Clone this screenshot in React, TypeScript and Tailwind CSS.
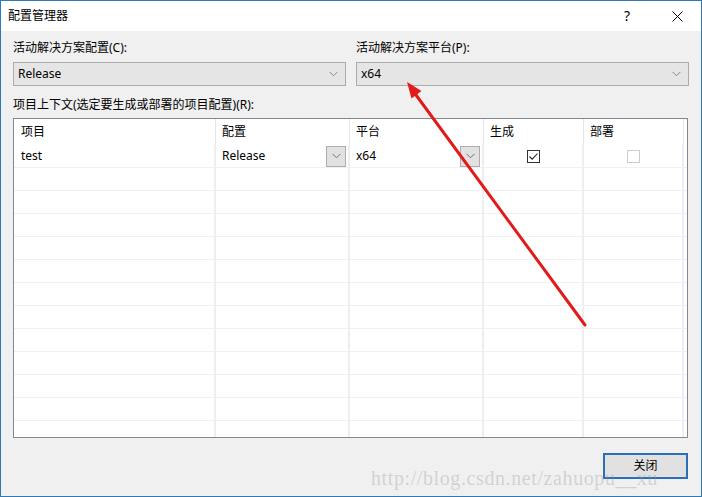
import React from "react";

const Chevron = ({ color = "#707070" }: { color?: string }) => (
  <svg width="9" height="6" viewBox="0 0 9 6">
    <path d="M0.5 0.8 L4.5 4.8 L8.5 0.8" fill="none" stroke={color} strokeWidth="1" />
  </svg>
);

const COLS = [202, 134, 134, 100, 100];

function Row({ first }: { first?: boolean }) {
  return (
    <div className="flex h-[23px] border-b border-[#f0f0f0] shrink-0">
      <div className="w-[202px] border-r-2 border-[#eceef2] flex items-center pl-[7px]">{first ? "test" : ""}</div>
      <div className="w-[134px] border-r-2 border-[#eceef2] flex items-center pl-[6px] pr-[2px]">
        {first && (
          <>
            <span className="flex-1">Release</span>
            <div className="w-[20px] h-[21px] bg-[#e1e1e1] border border-[#adadad] flex items-center justify-center">
              <Chevron />
            </div>
          </>
        )}
      </div>
      <div className="w-[134px] border-r-2 border-[#eceef2] flex items-center pl-[6px] pr-[2px]">
        {first && (
          <>
            <span className="flex-1">x64</span>
            <div className="w-[20px] h-[21px] bg-[#e1e1e1] border border-[#adadad] flex items-center justify-center">
              <Chevron />
            </div>
          </>
        )}
      </div>
      <div className="w-[100px] border-r-2 border-[#eceef2] flex items-center justify-center">
        {first && (
          <div className="w-[13px] h-[13px] border border-[#333333] bg-white flex items-center justify-center">
            <svg width="11" height="11" viewBox="0 0 11 11">
              <path d="M1.5 5.5 L4.2 8.2 L9.5 2.5" fill="none" stroke="#222" strokeWidth="1.1" />
            </svg>
          </div>
        )}
      </div>
      <div className="w-[100px] border-r-2 border-[#eceef2] flex items-center justify-center">
        {first && <div className="w-[13px] h-[13px] border border-[#cccccc] bg-white" />}
      </div>
      <div className="flex-1" />
    </div>
  );
}

export default function App() {
  const headers = ["项目", "配置", "平台", "生成", "部署"];
  return (
    <div className="relative w-[702px] h-[497px] border border-[#2e7ab8] bg-[#f0f0f0] flex flex-col text-[12px] leading-[16px] text-black font-['Noto_Sans','Noto_Sans_CJK_SC',sans-serif] overflow-hidden">
      {/* title bar */}
      <div className="h-[30px] bg-white flex items-center pl-[7px] shrink-0">
        <span className="text-[12px]">配置管理器</span>
        <span className="ml-auto w-[14px] text-center text-[14px] mr-[38px]">?</span>
        <svg width="11" height="11" viewBox="0 0 11 11" className="mr-[18px]">
          <path d="M0.5 0.5 L10.5 10.5 M10.5 0.5 L0.5 10.5" stroke="#000" strokeWidth="1" />
        </svg>
      </div>

      {/* body */}
      <div className="flex-1 flex flex-col pl-[12px] pr-[12px] pt-[9px]">
        <div className="grid grid-cols-2 gap-x-[10px]">
          <div className="flex flex-col">
            <span className="h-[16px]">活动解决方案配置(C):</span>
            <div className="mt-[6px] h-[24px] bg-[#e5e5e5] border border-[#acacac] flex items-center pl-[4px] pr-[7px]">
              <span className="flex-1">Release</span>
              <Chevron color="#8a8a8a" />
            </div>
          </div>
          <div className="flex flex-col">
            <span className="h-[16px]">活动解决方案平台(P):</span>
            <div className="mt-[6px] h-[24px] bg-[#e5e5e5] border border-[#acacac] flex items-center pl-[4px] pr-[7px]">
              <span className="flex-1">x64</span>
              <Chevron color="#8a8a8a" />
            </div>
          </div>
        </div>

        <span className="mt-[11px] h-[16px]">项目上下文(选定要生成或部署的项目配置)(R):</span>

        <div className="mt-[5px] w-[675px] h-[320px] border border-[#828790] bg-white flex flex-col overflow-hidden">
          <div className="flex h-[26px] shrink-0">
            {headers.map((h, i) => (
              <div
                key={h}
                style={{ width: COLS[i] }}
                className={`flex items-center border-r border-[#e5e5e5] ${i === 0 ? "pl-[7px]" : "pl-[6px]"}`}
              >
                {h}
              </div>
            ))}
            <div className="flex-1" />
          </div>
          <Row first />
          {Array.from({ length: 13 }).map((_, i) => (
            <Row key={i} />
          ))}
        </div>

        <div className="flex justify-end mt-[15px] mr-[1px]">
          <div className="w-[85px] h-[26px] bg-[#e1e1e1] border-2 border-[#2a6fb8] flex items-center justify-center">
            关闭
          </div>
        </div>
      </div>

      {/* watermark */}
      <div className="absolute left-[370px] top-[465px] text-[20px] leading-[24px] tracking-[0.6px] font-['Liberation_Serif',serif] text-[rgba(150,150,150,0.35)] pointer-events-none whitespace-nowrap">
        http://blog.csdn.net/zahuopu__xu
      </div>

      {/* red arrow annotation */}
      <svg className="absolute left-[-1px] top-[-1px] pointer-events-none" width="702" height="497" viewBox="0 0 702 497">
        <line x1="585" y1="325" x2="416" y2="95" stroke="#e21a1a" strokeWidth="3" strokeLinecap="round" />
        <polygon points="407,82 421.5,91 411.5,98.5" fill="#e21a1a" />
      </svg>
    </div>
  );
}
